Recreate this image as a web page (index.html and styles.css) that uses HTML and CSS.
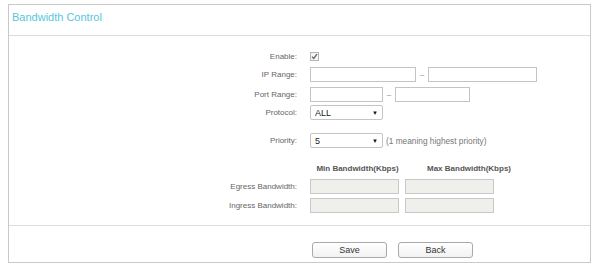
FILE: index.html
```html
<!DOCTYPE html>
<html lang="en">
<head>
  <meta charset="UTF-8">
  <title>Bandwidth Control</title>
  <link rel="stylesheet" href="styles.css">
</head>
<body>
  <div class="panel">
    <div class="head">Bandwidth Control</div>

    <div class="form">
      <div class="row row-enable">
        <div class="label">Enable:</div>
        <span class="check">
          <svg width="9" height="9" viewBox="0 0 9 9">
            <rect x="0.5" y="0.5" width="8" height="8" fill="#f4f4f4" stroke="#b5b5b5"/>
            <path d="M2 4.6 L3.7 6.4 L7 2.2" fill="none" stroke="#666" stroke-width="1.3"/>
          </svg>
        </span>
      </div>

      <div class="row row-ip">
        <div class="label">IP Range:</div>
        <input type="text" class="ip">
        <span class="dash">&ndash;</span>
        <input type="text" class="ip ip-end">
      </div>

      <div class="row row-port">
        <div class="label">Port Range:</div>
        <input type="text" class="port">
        <span class="dash">&ndash;</span>
        <input type="text" class="port port-end">
      </div>

      <div class="row row-proto">
        <div class="label">Protocol:</div>
        <div class="select"><span>ALL</span><span class="arrow">&#9660;</span></div>
      </div>

      <div class="row row-prio">
        <div class="label">Priority:</div>
        <div class="select"><span>5</span><span class="arrow">&#9660;</span></div>
        <span class="hint">(1 meaning highest priority)</span>
      </div>

      <div class="row row-titles">
        <div class="label"></div>
        <div class="col-title">Min Bandwidth(Kbps)</div>
        <div class="col-title col-max">Max Bandwidth(Kbps)</div>
      </div>

      <div class="row row-egress">
        <div class="label">Egress Bandwidth:</div>
        <input type="text" class="bw" disabled>
        <input type="text" class="bw" disabled>
      </div>

      <div class="row row-ingress">
        <div class="label">Ingress Bandwidth:</div>
        <input type="text" class="bw" disabled>
        <input type="text" class="bw" disabled>
      </div>
    </div>

    <div class="foot">
      <button>Save</button>
      <button>Back</button>
    </div>
  </div>
</body>
</html>
```

FILE: styles.css
```css
body {
  margin: 0;
  background: #fff;
  font-family: 'Liberation Sans', Arial, sans-serif;
  color: #666;
  font-size: 8px;
}
.panel {
  margin: 4px 10px 0 8px;
  border: 1px solid #c9c9c9;
  height: 259px;
  box-sizing: border-box;
}
.head {
  height: 31px;
  border-bottom: 1px solid #dcdcdc;
  padding: 6px 0 0 3px;
  box-sizing: border-box;
  font-size: 11px;
  color: #56c6da;
}
.form {
  border-bottom: 1px solid #dcdcdc;
  padding: 14px 0 12px 0;
}
.row {
  display: flex;
  align-items: center;
  height: 15px;
}
.label {
  width: 288px;
  margin-right: 13px;
  text-align: right;
  flex-shrink: 0;
}
.row-enable { height: 12px; }
.row-ip { margin-top: 5px; }
.row-port { margin-top: 5px; }
.row-proto { margin-top: 3px; }
.row-prio { margin-top: 13px; }
.row-titles { margin-top: 15px; height: 10px; }
.row-egress { margin-top: 6px; }
.row-ingress { margin-top: 4px; }
.check {
  display: flex;
  height: 9px;
}
input {
  height: 15px;
  box-sizing: border-box;
  border: 1px solid #c4c4c4;
  margin: 0;
  padding: 0 3px;
  font-family: 'Liberation Sans', Arial, sans-serif;
  font-size: 9px;
  background: #fff;
}
.ip { width: 106px; }
.ip-end { width: 109px; }
.port { width: 73px; }
.port-end { width: 75px; }
.dash {
  width: 12px;
  text-align: center;
  color: #888;
}
.select {
  width: 73px;
  height: 15px;
  box-sizing: border-box;
  border: 1px solid #c4c4c4;
  border-radius: 2px;
  display: flex;
  justify-content: space-between;
  align-items: center;
  padding: 0 4px;
  color: #222;
  font-size: 9px;
}
.arrow {
  font-size: 6px;
  color: #111;
}
.hint {
  margin-left: 3px;
  color: #777;
  font-size: 8.3px;
}
.col-title {
  width: 95px;
  text-align: center;
  font-weight: bold;
  color: #555;
}
.col-max {
  width: auto;
  padding-left: 22px;
  text-align: left;
}
.bw {
  width: 89px;
  margin-right: 6px;
  background: #efefec;
  border-color: #c8c8c8;
}
.foot {
  display: flex;
  gap: 11px;
  padding: 16px 0 0 303px;
}
button {
  width: 75px;
  height: 16px;
  border: 1px solid #a9a9a9;
  border-radius: 3px;
  background: linear-gradient(#ffffff, #f2f2f2);
  font-family: 'Liberation Sans', Arial, sans-serif;
  font-size: 9px;
  color: #333;
  padding: 0;
}
```
